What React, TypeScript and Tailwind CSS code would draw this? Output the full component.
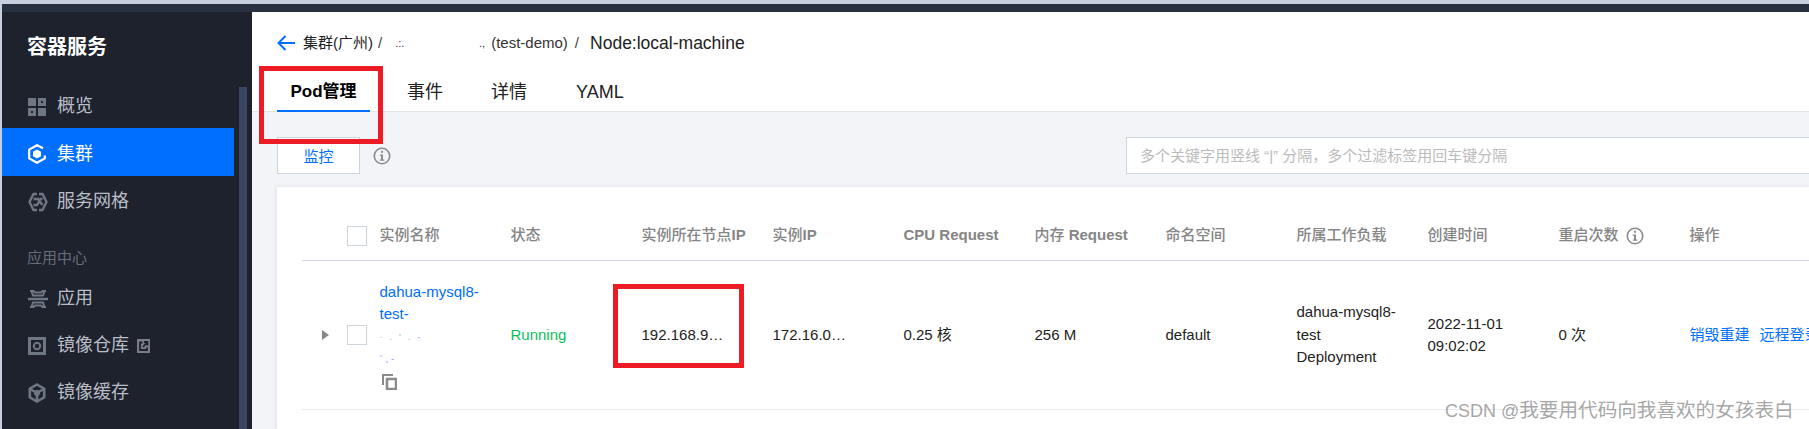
const font = "font-['Liberation_Sans','Noto_Sans_CJK_SC',sans-serif]";

function OverviewIcon() {
  return (
    <svg width="18" height="18" viewBox="0 0 18 18" fill="#6f7782">
      <rect x="0" y="0" width="8" height="8" />
      <path fillRule="evenodd" d="M10 0h8v8h-8zM13 3v2h2V3z" />
      <path fillRule="evenodd" d="M0 10h8v8H0zM3 13v2h2v-2z" />
      <rect x="10" y="10" width="8" height="8" />
    </svg>
  );
}

function ClusterIcon() {
  return (
    <svg width="18" height="20" viewBox="0 0 18 20" fill="none">
      <path d="M15 4.200 9 1.200 1.200 5.600v8.800L9 18.800l7.800-4.400v-3" stroke="#fff" strokeWidth="2.200" />
      <path d="M9 5.500 13 7.800v4.400L9 14.500 5 12.200V7.800z" fill="#fff" />
    </svg>
  );
}

function MeshIcon() {
  return (
    <svg width="20" height="20" viewBox="0 0 20 20" fill="none" stroke="#6f7782" strokeWidth="2.400">
      <path d="M9 2H5.500L1.500 10l4 8H9M11 18h3.500l4-8-4-8H11" />
      <path d="M5.500 7H10l4.500 6M5.500 13H9l2-3M11.500 7h3" />
    </svg>
  );
}

function AppIcon() {
  return (
    <svg width="20" height="20" viewBox="0 0 20 20" fill="none" stroke="#6f7782" strokeWidth="2">
      <path d="M0 10h20" strokeWidth="2.400" />
      <path d="M2 2h3.500L7 3.500h6L14.500 2H18M3.500 2 5 6.500h10L16.500 2" />
      <path d="M2 18h3.500L7 16.500h6l1.500 1.500H18M3.500 18 5 13.500h10l1.500 4.500" />
    </svg>
  );
}

function RegistryIcon() {
  return (
    <svg width="18" height="18" viewBox="0 0 18 18" fill="none">
      <path fillRule="evenodd" fill="#6f7782" d="M0 0h18v18H0zM3 3v12h12V3z" />
      <circle cx="9" cy="9" r="3.200" stroke="#6f7782" strokeWidth="2" />
    </svg>
  );
}

function CacheIcon() {
  return (
    <svg width="18" height="20" viewBox="0 0 18 20" fill="none" stroke="#6f7782">
      <path d="M9 1.500 16.200 5.700v8.600L9 18.500 1.800 14.300V5.700z" strokeWidth="2.600" />
      <path d="M9 10 3 6.500M9 10l6-3.500M9 10v8" strokeWidth="2.600" />
      <circle cx="9" cy="10" r="3" fill="#6f7782" stroke="none" />
    </svg>
  );
}

function ExternalIcon() {
  return (
    <svg width="13" height="14" viewBox="0 0 13 14">
      <path fill="#7a7d85" d="M0 0h13v14H0z" />
      <path fill="none" stroke="#1e222d" strokeWidth="1.800" d="M5.500 3.500H3V11h7V8.500M6 8l4-4.500M7 3h3.500v3.500" />
    </svg>
  );
}

function InfoIcon() {
  return (
    <svg width="18" height="18" viewBox="0 0 18 18" fill="none">
      <circle cx="9" cy="9" r="7.700" stroke="#8b8b8b" strokeWidth="1.600" />
      <rect x="8" y="3.800" width="2" height="2" fill="#8b8b8b" />
      <path d="M6.800 7.500H10v5h1.300v1.300H6.800v-1.300H8V8.800H6.800z" fill="#8b8b8b" />
    </svg>
  );
}

function BackArrow() {
  return (
    <svg width="18" height="16" viewBox="0 0 18 16" fill="none" stroke="#006eff" strokeWidth="2">
      <path d="M18 8H2M8.500 1 1.500 8l7 7" />
    </svg>
  );
}

function CopyIcon() {
  return (
    <svg width="15" height="16" viewBox="0 0 15 16" fill="none" stroke="#8a8a8a" strokeWidth="2">
      <path d="M1 11V1h10" />
      <rect x="5" y="5" width="9" height="10" strokeWidth="2.500" />
    </svg>
  );
}

function NavItem({ icon, label, active, extra }: { icon: React.ReactNode; label: string; active?: boolean; extra?: React.ReactNode }) {
  return (
    <div className={`flex items-center text-[18px] pl-[26px] pt-[4px] ${active ? "h-[48px] bg-[#006eff] text-white" : "h-[47px] text-[#b9bdc5]"}`}>
      <span className="w-[29px] flex items-center">{icon}</span>
      <span>{label}</span>
      {extra && <span className="ml-[8px] flex">{extra}</span>}
    </div>
  );
}

function Sidebar() {
  return (
    <aside className="w-[250px] bg-[#1e222d] flex shrink-0">
      <div className="w-[232px]">
        <div className="h-[69px] pl-[25px] pt-[21px] text-[20px] leading-[28px] font-bold text-white">容器服务</div>
        <NavItem icon={<OverviewIcon />} label="概览" />
        <NavItem icon={<ClusterIcon />} label="集群" active />
        <NavItem icon={<MeshIcon />} label="服务网格" />
        <div className="h-[50px] pl-[25px] pt-[25px] text-[15px] leading-[20px] text-[#666d7a]">应用中心</div>
        <NavItem icon={<AppIcon />} label="应用" />
        <NavItem icon={<RegistryIcon />} label="镜像仓库" extra={<ExternalIcon />} />
        <NavItem icon={<CacheIcon />} label="镜像缓存" />
      </div>
      <div className="ml-[5px] mt-[75px] w-[8px] bg-[#3a4560]" />
    </aside>
  );
}

function PageHeader() {
  return (
    <header className="h-[100px] shrink-0 bg-white border-b border-[#e4e6ea] pl-[25px]">
      <div className="h-[55px] flex items-center pt-[7px]">
        <BackArrow />
        <span className="ml-[8px] text-[15px] text-[#222]">集群(广州)</span>
        <span className="ml-[5px] text-[15px] text-[#444]">/</span>
        <span className="ml-[13px] w-[96px] flex justify-between pr-[6px] text-[11px] text-[#333]">
          <span>.:.</span>
          <span>.,</span>
        </span>
        <span className="text-[15px] text-[#333]">(test-demo)</span>
        <span className="ml-[7px] text-[15px] text-[#444]">/</span>
        <span className="ml-[11px] text-[17.5px] text-[#222]">Node:local-machine</span>
      </div>
      <nav className="flex text-[18px] text-[#222] h-[44px]">
        <div className="w-[93px] h-[45px] border-b-2 border-[#006eff] text-center text-[17px] font-bold text-black pt-[15px] leading-[20px]">Pod管理</div>
        <div className="ml-[37px] pt-[15px] leading-[20px]">事件</div>
        <div className="ml-[48px] pt-[15px] leading-[20px]">详情</div>
        <div className="ml-[49px] pt-[15px] leading-[20px]">YAML</div>
      </nav>
    </header>
  );
}

function Toolbar() {
  return (
    <div className="flex items-center shrink-0 pl-[25px] pt-[25px]">
      <button className="w-[83px] h-[37px] shrink-0 pt-[3px] bg-white border border-[#ced4dc] text-[15px] text-[#006eff]">监控</button>
      <span className="ml-[13px] flex shrink-0"><InfoIcon /></span>
      <div className="ml-[735px] w-[720px] shrink-0 h-[37px] bg-white border border-[#ced4dc] pl-[13px] text-[15px] leading-[35px] text-[#bbb] whitespace-nowrap">
        多个关键字用竖线 “|” 分隔，多个过滤标签用回车键分隔
      </div>
    </div>
  );
}

const columns = [
  <>实例名称</>,
  <>状态</>,
  <>实例所在节点<b>IP</b></>,
  <>实例<b>IP</b></>,
  <b>CPU Request</b>,
  <>内存 <b>Request</b></>,
  <>命名空间</>,
  <>所属工作负载</>,
  <>创建时间</>,
];
const gridCols = "grid grid-cols-[77.5px_repeat(9,131px)_131px_131px]";

function Checkbox() {
  return <span className="block w-[20px] h-[20px] bg-white border border-[#ced4dc]" />;
}

function PodTable() {
  return (
    <div className="mt-[13px] ml-[25px] flex-1 bg-white shadow-[-1px_0_4px_rgba(0,0,0,0.08)] pl-[25px] pt-[24px]">
      <div className={`${gridCols} h-[50px] items-center border-b border-[#d0d5df] text-[15px] font-medium text-[#858585]`}>
        <div className="pl-[45px]"><Checkbox /></div>
        {columns.map((c, i) => <div key={i} className="whitespace-nowrap">{c}</div>)}
        <div className="flex items-center gap-[7px]">重启次数 <InfoIcon /></div>
        <div>操作</div>
      </div>
      <div className={`${gridCols} h-[149px] items-center border-b border-[#e8eaed] text-[15px] leading-[22.5px] text-[#222]`}>
        <div className="flex items-center">
          <span className="ml-[20px] w-[25px]">
            <span className="block w-0 h-0 border-y-[5px] border-y-transparent border-l-[7px] border-l-[#888]" />
          </span>
          <Checkbox />
        </div>
        <div className="text-[#006eff]">
          <div>dahua-mysql8-</div>
          <div>test-</div>
          <div className="text-[9px] tracking-[7px] text-[#7fa8ff]">·.'.-</div>
          <div className="text-[9px] tracking-[3px] text-[#5f92ff]">`,-</div>
          <div className="pt-[3px] pl-[2px]"><CopyIcon /></div>
        </div>
        <div className="text-[#0abf5b]">Running</div>
        <div>192.168.9…</div>
        <div>172.16.0…</div>
        <div>0.25 核</div>
        <div>256 M</div>
        <div>default</div>
        <div><div>dahua-mysql8-</div><div>test</div><div>Deployment</div></div>
        <div><div>2022-11-01</div><div>09:02:02</div></div>
        <div>0 次</div>
        <div className="flex gap-[10px] whitespace-nowrap text-[#006eff]"><span>销毁重建</span><span>远程登录</span></div>
      </div>
    </div>
  );
}

export default function App() {
  return (
    <div className={`relative w-[1809px] h-[429px] overflow-hidden flex flex-col bg-[#c5cfe0] ${font}`}>
      <div className="h-[4px] shrink-0" />
      <div className="h-[8px] bg-[#29303f] shrink-0 ml-[2px]" />
      <div className="flex flex-1 min-h-0 pl-[2px]">
        <Sidebar />
        <main className="flex-1 min-w-0 flex flex-col bg-[#f2f4f8]">
          <PageHeader />
          <Toolbar />
          <PodTable />
        </main>
      </div>
      {/* red marker boxes drawn over the screenshot */}
      <div className="absolute left-[259px] top-[66px] w-[124px] h-[78px] border-[5px] border-[#ed1c24]" />
      <div className="absolute left-[613px] top-[284px] w-[131px] h-[84px] border-[5px] border-[#ed1c24]" />
      <div className="absolute left-[1445px] top-[397px] text-[18px] leading-[26px] text-[#8f8f8f]/80 whitespace-nowrap">
        CSDN @<span className="text-[19.6px]">我要用代码向我喜欢的女孩表白</span>
      </div>
    </div>
  );
}
